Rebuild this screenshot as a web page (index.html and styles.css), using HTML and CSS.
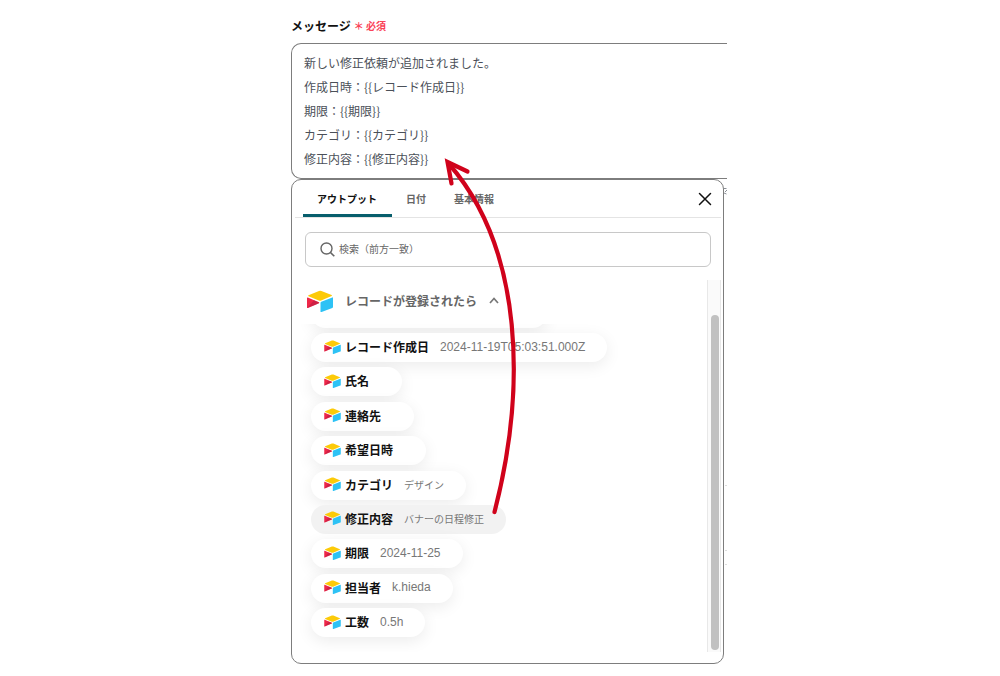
FILE: index.html
```html
<!DOCTYPE html>
<html lang="ja">
<head>
<meta charset="utf-8">
<title>メッセージ設定</title>
<link rel="stylesheet" href="styles.css">
</head>
<body>
<svg class="defs" aria-hidden="true">
  <symbol id="base-logo" viewBox="0 0 26 22">
    <path fill="#fcca08" d="M1.500 5.200 12 .9q1.200-.5 2.400 0l10.200 4.200q.8.5 0 .9l-10.400 4.500q-1.200.4-2.400 0L1.500 6.200q-.8-.5 0-1z"/>
    <path fill="#2dc2f5" d="M13.500 13q0-.8.8-1.200l11-4.400q.7-.2.7.5v9.200q0 .7-.7 1l-11 4q-.8.200-.8-.6z"/>
    <path fill="#ee2748" d="M0 8q0-.8.8-.5l11 4.700q.9.500 0 1L1 18q-1 .4-1-.5z"/>
    <path fill="#b91c42" d="m7 10.200 4.800 2q.9.500 0 1L8.600 14.700.4 17.700z" opacity=".6"/>
  </symbol>
</svg>
<main class="page">
  <div class="editor">
    <div class="field-head">
      <label class="field-label" for="message">メッセージ</label>
      <span class="required">＊ 必須</span>
    </div>
    <textarea class="message" id="message" rows="5">新しい修正依頼が追加されました。
作成日時：{{レコード作成日}}
期限：{{期限}}
カテゴリ：{{カテゴリ}}
修正内容：{{修正内容}}</textarea>

    <section class="panel">
      <nav class="tabs">
        <button class="tab tab-active" type="button">アウトプット</button>
        <button class="tab" type="button">日付</button>
        <button class="tab" type="button">基本情報</button>
        <button class="close" type="button" aria-label="閉じる">
          <svg width="14" height="14" viewBox="0 0 14 14"><path d="M1.500 1.500l11 11M12.500 1.500l-11 11" fill="none" stroke="#111" stroke-width="1.500" stroke-linecap="round"/></svg>
        </button>
      </nav>
      <div class="search">
        <svg width="15" height="15" viewBox="0 0 15 15"><circle cx="6.500" cy="6.500" r="5.500" fill="none" stroke="#666" stroke-width="1.400"/><path d="m10.500 10.500 3.800 3.800" stroke="#666" stroke-width="1.600"/></svg>
        <input class="search-input" type="text" placeholder="検索（前方一致）" aria-label="検索">
      </div>
      <div class="results">
        <div class="group">
          <button class="group-head" type="button">
            <svg class="group-logo"><use href="#base-logo"/></svg>
            <span>レコードが登録されたら</span>
            <svg width="10" height="7" viewBox="0 0 10 7"><path d="M1 6l4-4.500L9 6" fill="none" stroke="#777" stroke-width="1.700"/></svg>
          </button>
          <div class="list-clip">
            <div class="pill-cut"></div>
            <div class="list">
              <button class="pill" type="button"><svg class="logo"><use href="#base-logo"/></svg><b>レコード作成日</b><span class="value latin">2024-11-19T05:03:51.000Z</span></button>
              <button class="pill" type="button"><svg class="logo"><use href="#base-logo"/></svg><b>氏名</b><span class="value"></span></button>
              <button class="pill" type="button"><svg class="logo"><use href="#base-logo"/></svg><b>連絡先</b><span class="value"></span></button>
              <button class="pill" type="button"><svg class="logo"><use href="#base-logo"/></svg><b>希望日時</b><span class="value"></span></button>
              <button class="pill" type="button"><svg class="logo"><use href="#base-logo"/></svg><b>カテゴリ</b><span class="value">デザイン</span></button>
              <button class="pill pill-hover" type="button"><svg class="logo"><use href="#base-logo"/></svg><b>修正内容</b><span class="value">バナーの日程修正</span></button>
              <button class="pill" type="button"><svg class="logo"><use href="#base-logo"/></svg><b>期限</b><span class="value latin">2024-11-25</span></button>
              <button class="pill" type="button"><svg class="logo"><use href="#base-logo"/></svg><b>担当者</b><span class="value latin">k.hieda</span></button>
              <button class="pill" type="button"><svg class="logo"><use href="#base-logo"/></svg><b>工数</b><span class="value latin">0.5h</span></button>
            </div>
          </div>
        </div>
        <div class="track"><div class="thumb"></div></div>
      </div>
    </section>

    <svg class="edge" width="3" height="390" viewBox="0 0 3 390" aria-hidden="true">
      <path d="M0 2.500h2.500M1 6l2-2M0 7l2.500 1" stroke="#8a8f96" fill="none"/>
      <path d="M1 299.500h2M1 364.500h2M1 378.500h2" stroke="#ddd"/>
    </svg>
    <svg class="arrow" width="90" height="370" viewBox="435 150 90 370" aria-hidden="true">
      <path d="M494.500 512C526 390 524 250 449 164" fill="none" stroke="#d0021b" stroke-width="4.200" stroke-linecap="round"/>
      <path d="M467.500 171.500 447.500 162 451.500 183.500" fill="none" stroke="#d0021b" stroke-width="4.200" stroke-linecap="round"/>
    </svg>
  </div>
</main>
</body>
</html>
```
FILE: styles.css
```css
* { box-sizing: border-box; }

body {
  margin: 0;
  background: #fff;
  color: #111;
  font-family: "Noto Sans CJK JP", sans-serif;
}

button, input, textarea { font-family: inherit; }

button {
  margin: 0;
  padding: 0;
  border: 0;
  background: none;
  color: inherit;
}

.defs { position: absolute; width: 0; height: 0; }

.page {
  display: grid;
  grid-template-columns: 291fr minmax(0, 436px) 273fr;
  padding: 15px 0 12px;
}

.editor {
  position: relative;
  grid-column: 2;
}

.field-head {
  display: flex;
  align-items: center;
  gap: 3px;
  height: 20px;
  margin-bottom: 8px;
}

.field-label { font-size: 12px; font-weight: 700; }

.required { color: #fa4358; font-size: 10px; font-weight: 700; }

.message {
  display: block;
  width: 100%;
  height: 136px;
  padding: 7px 12px;
  border: 1px solid #7d7d7d;
  border-right: 0;
  border-radius: 10px 0 0 10px;
  outline: 0;
  resize: none;
  overflow: hidden;
  background: #fff;
  color: #4b5058;
  font-size: 12px;
  line-height: 24px;
}

.panel {
  margin-right: 3px;
  padding: 0 2px 11px 3px;
  border: 1px solid #7d7d7d;
  border-radius: 10px;
  background: #fff;
}

.tabs {
  display: flex;
  height: 38px;
  padding: 0 9px 0 8px;
  border-bottom: 1px solid #e4e4e4;
}

.tab {
  padding: 2px 14px 0;
  border-bottom: 3px solid transparent;
  color: #666;
  font-size: 10px;
  font-weight: 700;
}

.tab-active { padding: 2px 15px 0 14px; border-color: #075e6c; color: #111; }

.close {
  display: flex;
  align-items: center;
  margin-left: auto;
}

.search {
  display: flex;
  align-items: center;
  gap: 4px;
  height: 35px;
  margin: 14px 10px 13px;
  padding: 0 14px;
  border: 1px solid #c8c8c8;
  border-radius: 6px;
}

.search-input {
  flex: 1;
  min-width: 0;
  padding: 0 0 2px;
  border: 0;
  outline: 0;
  background: none;
  font-size: 10px;
}

.search-input::placeholder { color: #666; opacity: 1; }

.results { display: flex; height: 372px; }

.group {
  display: flex;
  flex: 1;
  flex-direction: column;
  min-width: 0;
}

.group-head {
  display: flex;
  align-items: center;
  gap: 12px;
  height: 44px;
  padding: 0 12px 3px;
  color: #666;
  font-size: 12px;
  font-weight: 700;
}

.group-logo { width: 26px; height: 22px; }

.list-clip {
  display: flex;
  flex: 1;
  flex-direction: column;
  gap: 5px;
  padding: 0 16px 15px;
  overflow: hidden;
}

.pill-cut {
  width: 236px;
  height: 29px;
  margin-top: -25px;
  border-radius: 15px;
  box-shadow: 0 4px 16px rgba(0, 0, 0, 0.08);
}

.list {
  display: flex;
  flex: 1;
  flex-direction: column;
  align-items: flex-start;
  justify-content: space-between;
}

.pill {
  display: flex;
  align-items: center;
  height: 29px;
  padding: 0 22px 2px 13px;
  border-radius: 15px;
  background: #fff;
  box-shadow: 0 4px 16px rgba(0, 0, 0, 0.08);
  font-size: 12px;
  white-space: nowrap;
}

.pill-hover { background: #f2f2f2; box-shadow: none; }

.logo { width: 17px; height: 14px; margin-right: 4px; }

.value { margin-left: 11px; color: #777; font-size: 10px; }

.latin { font-family: "Liberation Sans", sans-serif; font-size: 12px; }

.track {
  width: 14px;
  padding: 35px 1px 2px 3px;
  border: solid #e8e8e8;
  border-width: 0 1px;
  background: #fafafa;
}

.thumb {
  height: 100%;
  border-radius: 4px;
  background: #c1c1c1;
}

.edge { position: absolute; top: 171px; right: 0; }

.arrow { position: absolute; top: 135px; left: 144px; }
```
